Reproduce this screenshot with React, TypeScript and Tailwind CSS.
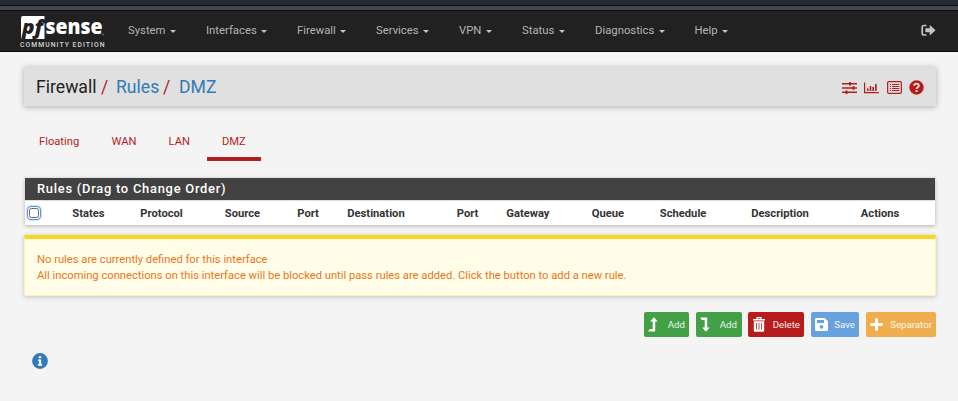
import type { ReactNode } from "react";

const menu = [
  { label: "System", width: "w-[78px]" },
  { label: "Interfaces", width: "w-[91px]" },
  { label: "Firewall", width: "w-[79px]" },
  { label: "Services", width: "w-[83px]" },
  { label: "VPN", width: "w-[63px]" },
  { label: "Status", width: "w-[73px]" },
  { label: "Diagnostics", width: "w-[99.5px]" },
  { label: "Help", width: "w-[63px]" },
];

const columns = [
  { label: "States", width: "w-[68px]" },
  { label: "Protocol", width: "w-[84.5px]" },
  { label: "Source", width: "w-[72.5px]" },
  { label: "Port", width: "w-[50px]" },
  { label: "Destination", width: "w-[109.5px]" },
  { label: "Port", width: "w-[49.5px]" },
  { label: "Gateway", width: "w-[85.5px]" },
  { label: "Queue", width: "w-[68px]" },
  { label: "Schedule", width: "w-[91.5px]" },
  { label: "Description", width: "w-[109.5px]" },
  { label: "Actions", width: "w-[60px]" },
];

function Logo() {
  return (
    <svg className="block h-[36px] w-[90px] overflow-visible" viewBox="0 0 90 36">
      <path d="M3 1H24.500V5.500Q22.500 5.500 22.300 8H24.500V24H1V3Q1 1 3 1Z" fill="#fff" />
      <text x="2" y="19" fontFamily="Open Sans, sans-serif" fontWeight="800" fontStyle="italic" fontSize="19.500" fill="#212121" textLength="21" lengthAdjust="spacingAndGlyphs">pf</text>
      <text x="25.500" y="19" fontFamily="Open Sans, sans-serif" fontWeight="800" fontSize="20.500" fill="#fff" textLength="57" lengthAdjust="spacingAndGlyphs">sense</text>
      <circle cx="83" cy="19.500" r=".7" fill="#aaa" />
      <text x="0" y="31.500" fontFamily="Roboto, sans-serif" fontWeight="500" fontSize="6.800" fill="#d4d4d4" textLength="84.500" lengthAdjust="spacing">COMMUNITY EDITION</text>
    </svg>
  );
}

function SignOut() {
  return (
    <svg className="h-[13px] w-[15px]" viewBox="0 0 15 13">
      <path d="M5.500 1.500H3Q1.200 1.500 1.200 3.300V9.200Q1.200 11 3 11H5.500" fill="none" stroke="#c4c4c4" strokeWidth="1.700" />
      <path d="M4.800 4.300H8.700V1.600Q8.700 .8 9.400 1.400L14.300 5.900Q14.600 6.200 14.300 6.600L9.400 11.100Q8.700 11.700 8.700 10.900V8.200H4.800Q4.300 8.200 4.300 7.700V4.800Q4.300 4.300 4.800 4.300Z" fill="#c4c4c4" />
    </svg>
  );
}

function Sliders() {
  return (
    <svg className="h-[14px] w-[15px]" viewBox="0 0 15 14" fill="#b71c1c">
      <path d="M0 2H15V3.500H0ZM0 6.300H15V7.800H0ZM0 10.600H15V12.100H0Z" />
      <path d="M7 1H9V4.500H7ZM10.500 5.300H12.500V8.800H10.500ZM3.500 9.600H5.500V13.100H3.500Z" />
    </svg>
  );
}

function BarChart() {
  return (
    <svg className="h-[12px] w-[15px]" viewBox="0 0 15 12" fill="#b71c1c">
      <path d="M0 .5H1.200V10H15V11.200H0ZM3 6.500H4.600V9H3ZM5.700 4H7.300V9H5.700ZM8.400 5H10V9H8.400ZM11.100 2H12.700V9H11.100Z" />
    </svg>
  );
}

function ListAlt() {
  return (
    <svg className="h-[13px] w-[15px]" viewBox="0 0 15 13">
      <rect x=".65" y=".65" width="13.700" height="11.700" rx="1" fill="none" stroke="#b71c1c" strokeWidth="1.200" />
      <path d="M2.800 3H4.100V4H2.800ZM5 3H12.300V4H5ZM2.800 5H4.100V6H2.800ZM5 5H12.300V6H5ZM2.800 7H4.100V8H2.800ZM5 7H12.300V8H5ZM2.800 9H4.100V10H2.800ZM5 9H12.300V10H5Z" fill="#b71c1c" />
    </svg>
  );
}

function Question() {
  return (
    <svg className="h-[15px] w-[15px]" viewBox="0 0 15 15">
      <circle cx="7.500" cy="7.500" r="7.200" fill="#b71c1c" />
      <path d="M5 5.700C5.300 2.900 10.100 3 9.800 5.800C9.600 7.400 7.500 7.200 7.500 9" fill="none" stroke="#e6e0e0" strokeWidth="1.900" />
      <path d="M6.500 10H8.500V12H6.500Z" fill="#e6e0e0" />
    </svg>
  );
}

function ActionButton({ label, look, children }: { label: string; look: string; children: ReactNode }) {
  return (
    <button className={`flex h-[25px] items-center justify-between rounded-[2px] text-[9.700px] text-white/90 ${look}`}>
      {children}
      <span className="pt-px">{label}</span>
    </button>
  );
}

export default function App() {
  return (
    <div className="h-[401px] w-[958px] overflow-hidden bg-[#f4f4f4] font-[Roboto,sans-serif] text-[11px] text-[#212121]">
      <div className="h-[5px] bg-[#262a36]" />
      <div className="h-[6px] border-y border-[#0c0d10] bg-[#43474c]" />
      <nav className="flex h-[41px] border-b border-[#080808] bg-[#212121] pl-5">
        <div className="w-[108px] pt-1">
          <Logo />
        </div>
        <ul className="flex h-[40px] flex-1 items-center text-[11.300px] leading-4 text-[#b4b4b4]">
          {menu.map((m) => (
            <li key={m.label} className={`flex shrink-0 items-center whitespace-nowrap ${m.width}`}>
              {m.label}
              <span className="mt-px ml-[4.500px] border-x-[3px] border-t-[3px] border-x-transparent border-t-[#c4c4c4]" />
            </li>
          ))}
        </ul>
        <div className="pt-[13px] pr-[22px]">
          <SignOut />
        </div>
      </nav>

      <main className="pt-[15px] pr-[22px] pl-6">
        <header className="flex h-[39px] items-center justify-between bg-[#e0e0e0] pr-3 pl-3 shadow-[0_1px_6px_rgba(0,0,0,0.3)]">
          <h1 className="flex text-[17.600px] leading-[20px]">
            <span className="w-[65px]">Firewall</span>
            <span className="w-[15px] text-[#b71c1c]">/</span>
            <span className="w-[47px] text-[#337ab7]">Rules</span>
            <span className="w-[16px] text-[#b71c1c]">/</span>
            <span className="text-[#337ab7]">DMZ</span>
          </h1>
          <div className="flex items-center gap-[7.500px] pt-[2px]">
            <Sliders />
            <BarChart />
            <ListAlt />
            <Question />
          </div>
        </header>

        <div className="mt-[17px] flex h-[38px] text-[11.200px] leading-[37px] text-[#b71c1c]">
          <span className="w-[72.500px] pl-[15px]">Floating</span>
          <span className="w-[57px] pl-[15px]">WAN</span>
          <span className="w-[53.500px] pl-[15px]">LAN</span>
          <span className="w-[54px] border-b-4 border-[#b01f24] pl-[15px]">DMZ</span>
        </div>

        <section className="mx-px mt-[17px] h-[47px] bg-white shadow-[0_1px_4px_rgba(0,0,0,0.28)]">
          <h2 className="h-[22px] bg-[#424242] pl-3 text-[12.900px] leading-[22px] font-medium tracking-[0.75px] text-white">
            Rules (Drag to Change Order)
          </h2>
          <div className="flex h-[25px] items-center border-t border-[#ddd] text-[11.200px] font-bold text-[#333]">
            <div className="w-[47.300px] pl-[2px]">
              <div className="h-[14px] w-[14px] rounded-[4px] border border-[#5b92dc] bg-white p-px shadow-[0_0_0_1px_#cfe2fa]">
                <div className="h-full w-full rounded-[2.500px] border border-[#65676f] bg-white" />
              </div>
            </div>
            {columns.map((c, i) => (
              <div key={i} className={`shrink-0 pt-[2px] ${c.width}`}>{c.label}</div>
            ))}
          </div>
        </section>

        <section className="mt-[10px] h-[61px] border border-t-4 border-[#fff0b3] border-t-[#f9d423] bg-[#fffde7] pt-[13px] pl-3 text-[11.200px] leading-4 text-[#e87722] shadow-[0_1px_5px_rgba(0,0,0,0.2)]">
          <p>No rules are currently defined for this interface</p>
          <p>All incoming connections on this interface will be blocked until pass rules are added. Click the button to add a new rule.</p>
        </section>

        <div className="mt-4 flex justify-end">
          <ActionButton label="Add" look="w-[45px] mr-[7px] pl-[4px] pr-[4px] bg-[#43a047]">
            <svg className="h-[15px] w-[10px]" viewBox="0 0 10 15" fill="#fff">
              <path d="M5.900 .2L9.700 4.600H7.200V14.500H.8L.2 14L2 12.100H4.700V4.600H2.200Z" />
            </svg>
          </ActionButton>
          <ActionButton label="Add" look="w-[46px] mr-[6px] pl-[4px] pr-[5px] bg-[#43a047]">
            <svg className="h-[15px] w-[10px]" viewBox="0 0 10 15" fill="#fff">
              <path d="M.7 .5H7.200V10.400H9.700L5.900 14.800L2.200 10.400H4.700V2.900H2L.2 1Z" />
            </svg>
          </ActionButton>
          <ActionButton label="Delete" look="w-[56px] mr-[7px] pl-[5px] pr-[4px] bg-[#b71c1c]">
            <svg className="h-[15px] w-[12px]" viewBox="0 0 12 15">
              <path d="M0 2H3.300V.8Q3.300 0 4 0H8Q8.700 0 8.700 .8V2H12V3.500H0ZM4.500 1.200V2H7.500V1.200ZM.8 4.200H11.200V13.500Q11.200 14.700 10 14.700H2Q.8 14.700 .8 13.500Z" fill="#fff" fillRule="evenodd" />
              <path d="M3.500 6V12.500M6 6V12.500M8.500 6V12.500" stroke="#b71c1c" strokeWidth=".8" />
            </svg>
          </ActionButton>
          <ActionButton label="Save" look="w-[48px] mr-[7px] pl-[4px] pr-[4px] bg-[#68a2de]">
            <svg className="h-[13px] w-[13px]" viewBox="0 0 13 13">
              <path d="M1.500 0H9.700L13 3.300V11.500Q13 13 11.500 13H1.500Q0 13 0 11.500V1.500Q0 0 1.500 0ZM2 2V5H9V2Z" fill="#fff" fillRule="evenodd" />
              <circle cx="6.500" cy="8.800" r="1.900" fill="#68a2de" />
            </svg>
          </ActionButton>
          <ActionButton label="Separator" look="w-[70px] pl-[4px] pr-[4px] bg-[#f0ad4e]">
            <svg className="h-[13px] w-[13px]" viewBox="0 0 13 13" fill="#fff">
              <path d="M5 1Q5 .3 5.700 .3H7.300Q8 .3 8 1V5H12Q12.700 5 12.700 5.700V7.300Q12.700 8 12 8H8V12Q8 12.700 7.300 12.700H5.700Q5 12.700 5 12V8H1Q.3 8 .3 7.300V5.700Q.3 5 1 5H5Z" />
            </svg>
          </ActionButton>
        </div>

        <svg className="mt-4 ml-2 h-[16px] w-[16px]" viewBox="0 0 16 16">
          <circle cx="8" cy="8" r="7.900" fill="#337ab7" />
          <path d="M6.800 3.200H9.200V5.200H6.800ZM5.900 6.500H9.200V11.300H10.200V12.700H5.900V11.300H6.900V7.800H5.900Z" fill="#fff" />
        </svg>
      </main>
    </div>
  );
}
